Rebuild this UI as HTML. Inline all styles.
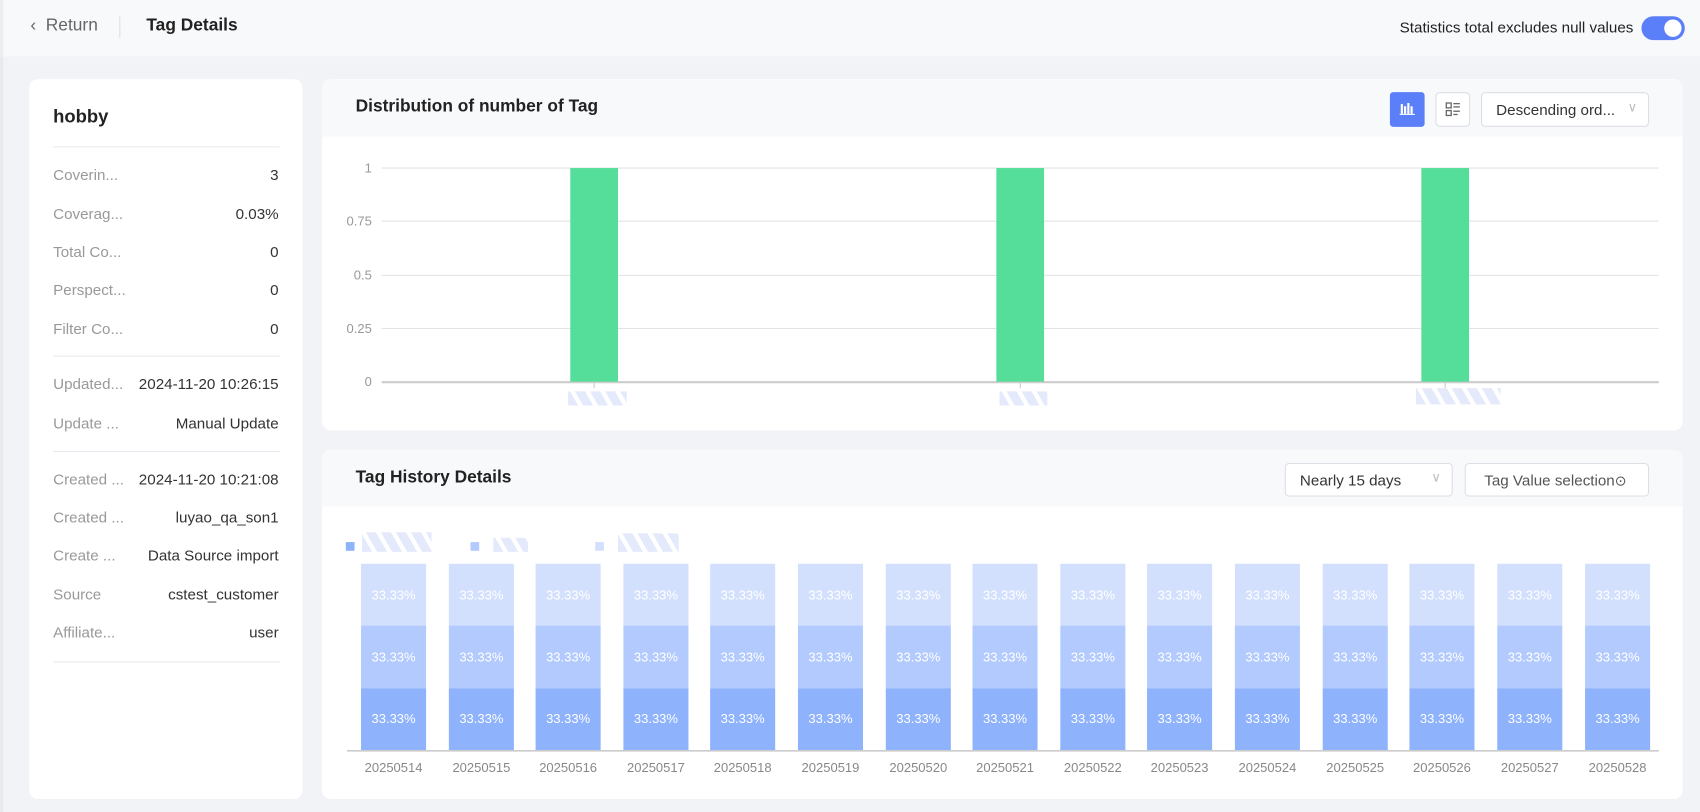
<!DOCTYPE html>
<html><head><meta charset="utf-8"><style>
*{margin:0;padding:0;box-sizing:border-box}
html,body{width:1700px;height:812px;overflow:hidden}
body{background:#f2f3f7;font-family:"Liberation Sans",sans-serif;color:#333}
#w{position:absolute;left:0;top:0;width:1568px;height:749px;transform:scale(1.08418);transform-origin:0 0}
.abs{position:absolute}
.hdr{left:0;top:0;width:1568px;height:52px;background:#f8f9fb;border-left:3px solid #eceef2}
.card{background:#fff;border-radius:8px}
.lbl{position:absolute;left:49px;font-size:14px;color:#999}
.val{position:absolute;right:1311px;font-size:14px;color:#333;text-align:right}
.div{position:absolute;left:49px;width:209px;height:1px;background:#e8e9ee}
.btn{position:absolute;border:1px solid #dcdfe6;border-radius:4px;background:#fff;font-size:14px;color:#333}
.hatch{position:absolute;background:repeating-linear-gradient(60deg,#e4e9fb 0 8px,transparent 8px 12px)}
</style></head><body><div id="w">
<div class="abs" style="left:0;top:0;width:3px;height:749px;background:#e8eaee"></div>
<div class="abs hdr"></div>
<div class="abs" style="left:28px;top:15px;font-size:16px;color:#666">&#8249;&nbsp; Return</div>
<div class="abs" style="left:110px;top:15px;width:1px;height:20px;background:#e0e0e0"></div>
<div class="abs" style="left:135px;top:15px;font-size:16px;font-weight:bold;color:#222">Tag Details</div>
<div class="abs" style="left:1291px;top:17px;font-size:14px;color:#222">Statistics total excludes null values</div>
<div class="abs" style="left:1514px;top:15px;width:40px;height:22px;border-radius:11px;background:#5b7ff8"><div class="abs" style="right:3px;top:3px;width:16px;height:16px;border-radius:50%;background:#fff"></div></div>

<div class="abs card" style="left:27px;top:73px;width:252px;height:664px">
<div class="abs" style="left:22px;top:25px;font-size:17px;font-weight:bold;color:#222">hobby</div>
</div>
<div class="abs" style="left:0;top:0;width:1568px">
<div class="div" style="top:135px"></div>
<div class="lbl" style="top:153px">Coverin...</div><div class="val" style="top:153px">3</div>
<div class="lbl" style="top:189px">Coverag...</div><div class="val" style="top:189px">0.03%</div>
<div class="lbl" style="top:224px">Total Co...</div><div class="val" style="top:224px">0</div>
<div class="lbl" style="top:259px">Perspect...</div><div class="val" style="top:259px">0</div>
<div class="lbl" style="top:295px">Filter Co...</div><div class="val" style="top:295px">0</div>
<div class="div" style="top:328px"></div>
<div class="lbl" style="top:346px">Updated...</div><div class="val" style="top:346px">2024-11-20 10:26:15</div>
<div class="lbl" style="top:382px">Update ...</div><div class="val" style="top:382px">Manual Update</div>
<div class="div" style="top:416px"></div>
<div class="lbl" style="top:434px">Created ...</div><div class="val" style="top:434px">2024-11-20 10:21:08</div>
<div class="lbl" style="top:469px">Created ...</div><div class="val" style="top:469px">luyao_qa_son1</div>
<div class="lbl" style="top:504px">Create ...</div><div class="val" style="top:504px">Data Source import</div>
<div class="lbl" style="top:540px">Source</div><div class="val" style="top:540px">cstest_customer</div>
<div class="lbl" style="top:575px">Affiliate...</div><div class="val" style="top:575px">user</div>
<div class="div" style="top:610px"></div>
</div>

<div class="abs card" style="left:297px;top:73px;width:1255px;height:324px;overflow:hidden">
<div class="abs" style="left:0;top:0;width:1255px;height:53px;background:#f8f9fb"></div>
<div class="abs" style="left:31px;top:17px;font-size:16px;font-weight:bold;color:#222">Distribution of number of Tag</div>
</div>
<div class="abs" style="left:1282px;top:85px;width:32px;height:32px;background:#5b7ff8;border-radius:3px">
<svg width="32" height="32"><g fill="#fff"><rect x="10" y="11" width="2" height="9"/><rect x="13" y="13" width="2" height="7"/><rect x="16" y="10" width="2" height="10"/><rect x="19" y="13" width="2" height="7"/><rect x="9" y="20" width="14" height="1"/></g></svg></div>
<div class="btn" style="left:1324px;top:85px;width:32px;height:32px">
<svg width="30" height="30"><g fill="none" stroke="#666" stroke-width="1.2"><rect x="9" y="9" width="4.5" height="4.5"/><rect x="9" y="16" width="4.5" height="4.5"/></g><g fill="#666"><rect x="15.5" y="9" width="6" height="1.2"/><rect x="15.5" y="12" width="6" height="1.2"/><rect x="15.5" y="16" width="6" height="1.2"/><rect x="15.5" y="19" width="4" height="1.2"/></g></svg></div>
<div class="btn" style="left:1366px;top:85px;width:155px;height:32px;padding:7px 0 0 13px">Descending ord...<span style="position:absolute;right:10px;top:6px;color:#bbb;font-size:12px">&#8744;</span></div>

<svg class="abs" style="left:297px;top:126px" width="1255" height="260">
<g stroke="#e3e3e3" stroke-width="1"><line x1="55" y1="29" x2="1233" y2="29"/><line x1="55" y1="78" x2="1233" y2="78"/><line x1="55" y1="128" x2="1233" y2="128"/><line x1="55" y1="177" x2="1233" y2="177"/></g>
<line x1="55" y1="226.5" x2="1233" y2="226.5" stroke="#ccc" stroke-width="2"/>
<g font-size="12" fill="#999" text-anchor="end" font-family="Liberation Sans"><text x="46" y="33">1</text><text x="46" y="82">0.75</text><text x="46" y="132">0.5</text><text x="46" y="181">0.25</text><text x="46" y="230">0</text></g>
<g fill="#55de99"><rect x="229" y="29" width="44" height="197"/><rect x="622" y="29" width="44" height="197"/><rect x="1014" y="29" width="44" height="197"/></g>
<g stroke="#ccc"><line x1="251" y1="227" x2="251" y2="232"/><line x1="644" y1="227" x2="644" y2="232"/><line x1="1036" y1="227" x2="1036" y2="232"/></g>
</svg>
<div class="hatch" style="left:524px;top:361px;width:54px;height:13px"></div>
<div class="hatch" style="left:922px;top:361px;width:44px;height:13px"></div>
<div class="hatch" style="left:1306px;top:358px;width:78px;height:15px"></div>

<div class="abs card" style="left:297px;top:415px;width:1255px;height:322px;overflow:hidden">
<div class="abs" style="left:0;top:0;width:1255px;height:52px;background:#f8f9fb"></div>
<div class="abs" style="left:31px;top:17px;font-size:16px;font-weight:bold;color:#222">Tag History Details</div>
</div>
<div class="btn" style="left:1185px;top:427px;width:155px;height:31px;padding:7px 0 0 13px">Nearly 15 days<span style="position:absolute;right:10px;top:5px;color:#bbb;font-size:12px">&#8744;</span></div>
<div class="btn" style="left:1351px;top:427px;width:170px;height:31px;padding:7px 0 0 17px;color:#555">Tag Value selection<span style="font-size:13px">&#8857;</span></div>

<div class="abs" style="left:319px;top:500px;width:8px;height:8px;background:#8eb2fc"></div>
<div class="hatch" style="left:334px;top:491px;width:64px;height:18px"></div>
<div class="abs" style="left:434px;top:500px;width:8px;height:8px;background:#b2cafd"></div>
<div class="hatch" style="left:455px;top:496px;width:32px;height:13px"></div>
<div class="abs" style="left:549px;top:500px;width:8px;height:8px;background:#d3e0fd"></div>
<div class="hatch" style="left:570px;top:492px;width:56px;height:17px"></div>

<svg class="abs" style="left:0;top:0" width="1568" height="749" font-family="Liberation Sans">
<g font-size="12" text-anchor="middle">
<g fill="#d3e0fd"><rect x="333" y="520" width="60" height="57"/><rect x="414" y="520" width="60" height="57"/><rect x="494" y="520" width="60" height="57"/><rect x="575" y="520" width="60" height="57"/><rect x="655" y="520" width="60" height="57"/><rect x="736" y="520" width="60" height="57"/><rect x="817" y="520" width="60" height="57"/><rect x="897" y="520" width="60" height="57"/><rect x="978" y="520" width="60" height="57"/><rect x="1058" y="520" width="60" height="57"/><rect x="1139" y="520" width="60" height="57"/><rect x="1220" y="520" width="60" height="57"/><rect x="1300" y="520" width="60" height="57"/><rect x="1381" y="520" width="60" height="57"/><rect x="1462" y="520" width="60" height="57"/></g>
<g fill="#b2cafd"><rect x="333" y="577" width="60" height="58"/><rect x="414" y="577" width="60" height="58"/><rect x="494" y="577" width="60" height="58"/><rect x="575" y="577" width="60" height="58"/><rect x="655" y="577" width="60" height="58"/><rect x="736" y="577" width="60" height="58"/><rect x="817" y="577" width="60" height="58"/><rect x="897" y="577" width="60" height="58"/><rect x="978" y="577" width="60" height="58"/><rect x="1058" y="577" width="60" height="58"/><rect x="1139" y="577" width="60" height="58"/><rect x="1220" y="577" width="60" height="58"/><rect x="1300" y="577" width="60" height="58"/><rect x="1381" y="577" width="60" height="58"/><rect x="1462" y="577" width="60" height="58"/></g>
<g fill="#8eb2fc"><rect x="333" y="635" width="60" height="57"/><rect x="414" y="635" width="60" height="57"/><rect x="494" y="635" width="60" height="57"/><rect x="575" y="635" width="60" height="57"/><rect x="655" y="635" width="60" height="57"/><rect x="736" y="635" width="60" height="57"/><rect x="817" y="635" width="60" height="57"/><rect x="897" y="635" width="60" height="57"/><rect x="978" y="635" width="60" height="57"/><rect x="1058" y="635" width="60" height="57"/><rect x="1139" y="635" width="60" height="57"/><rect x="1220" y="635" width="60" height="57"/><rect x="1300" y="635" width="60" height="57"/><rect x="1381" y="635" width="60" height="57"/><rect x="1462" y="635" width="60" height="57"/></g>
<g fill="#fff">
<text x="363" y="553">33.33%</text><text x="444" y="553">33.33%</text><text x="524" y="553">33.33%</text><text x="605" y="553">33.33%</text><text x="685" y="553">33.33%</text><text x="766" y="553">33.33%</text><text x="847" y="553">33.33%</text><text x="927" y="553">33.33%</text><text x="1008" y="553">33.33%</text><text x="1088" y="553">33.33%</text><text x="1169" y="553">33.33%</text><text x="1250" y="553">33.33%</text><text x="1330" y="553">33.33%</text><text x="1411" y="553">33.33%</text><text x="1492" y="553">33.33%</text>
<text x="363" y="610">33.33%</text><text x="444" y="610">33.33%</text><text x="524" y="610">33.33%</text><text x="605" y="610">33.33%</text><text x="685" y="610">33.33%</text><text x="766" y="610">33.33%</text><text x="847" y="610">33.33%</text><text x="927" y="610">33.33%</text><text x="1008" y="610">33.33%</text><text x="1088" y="610">33.33%</text><text x="1169" y="610">33.33%</text><text x="1250" y="610">33.33%</text><text x="1330" y="610">33.33%</text><text x="1411" y="610">33.33%</text><text x="1492" y="610">33.33%</text>
<text x="363" y="667">33.33%</text><text x="444" y="667">33.33%</text><text x="524" y="667">33.33%</text><text x="605" y="667">33.33%</text><text x="685" y="667">33.33%</text><text x="766" y="667">33.33%</text><text x="847" y="667">33.33%</text><text x="927" y="667">33.33%</text><text x="1008" y="667">33.33%</text><text x="1088" y="667">33.33%</text><text x="1169" y="667">33.33%</text><text x="1250" y="667">33.33%</text><text x="1330" y="667">33.33%</text><text x="1411" y="667">33.33%</text><text x="1492" y="667">33.33%</text>
</g>
<g fill="#888">
<text x="363" y="712">20250514</text><text x="444" y="712">20250515</text><text x="524" y="712">20250516</text><text x="605" y="712">20250517</text><text x="685" y="712">20250518</text><text x="766" y="712">20250519</text><text x="847" y="712">20250520</text><text x="927" y="712">20250521</text><text x="1008" y="712">20250522</text><text x="1088" y="712">20250523</text><text x="1169" y="712">20250524</text><text x="1250" y="712">20250525</text><text x="1330" y="712">20250526</text><text x="1411" y="712">20250527</text><text x="1492" y="712">20250528</text>
</g>
</g>
<line x1="320" y1="692.5" x2="1530" y2="692.5" stroke="#ccc" stroke-width="1.5"/>
</svg>
</div></body></html>
